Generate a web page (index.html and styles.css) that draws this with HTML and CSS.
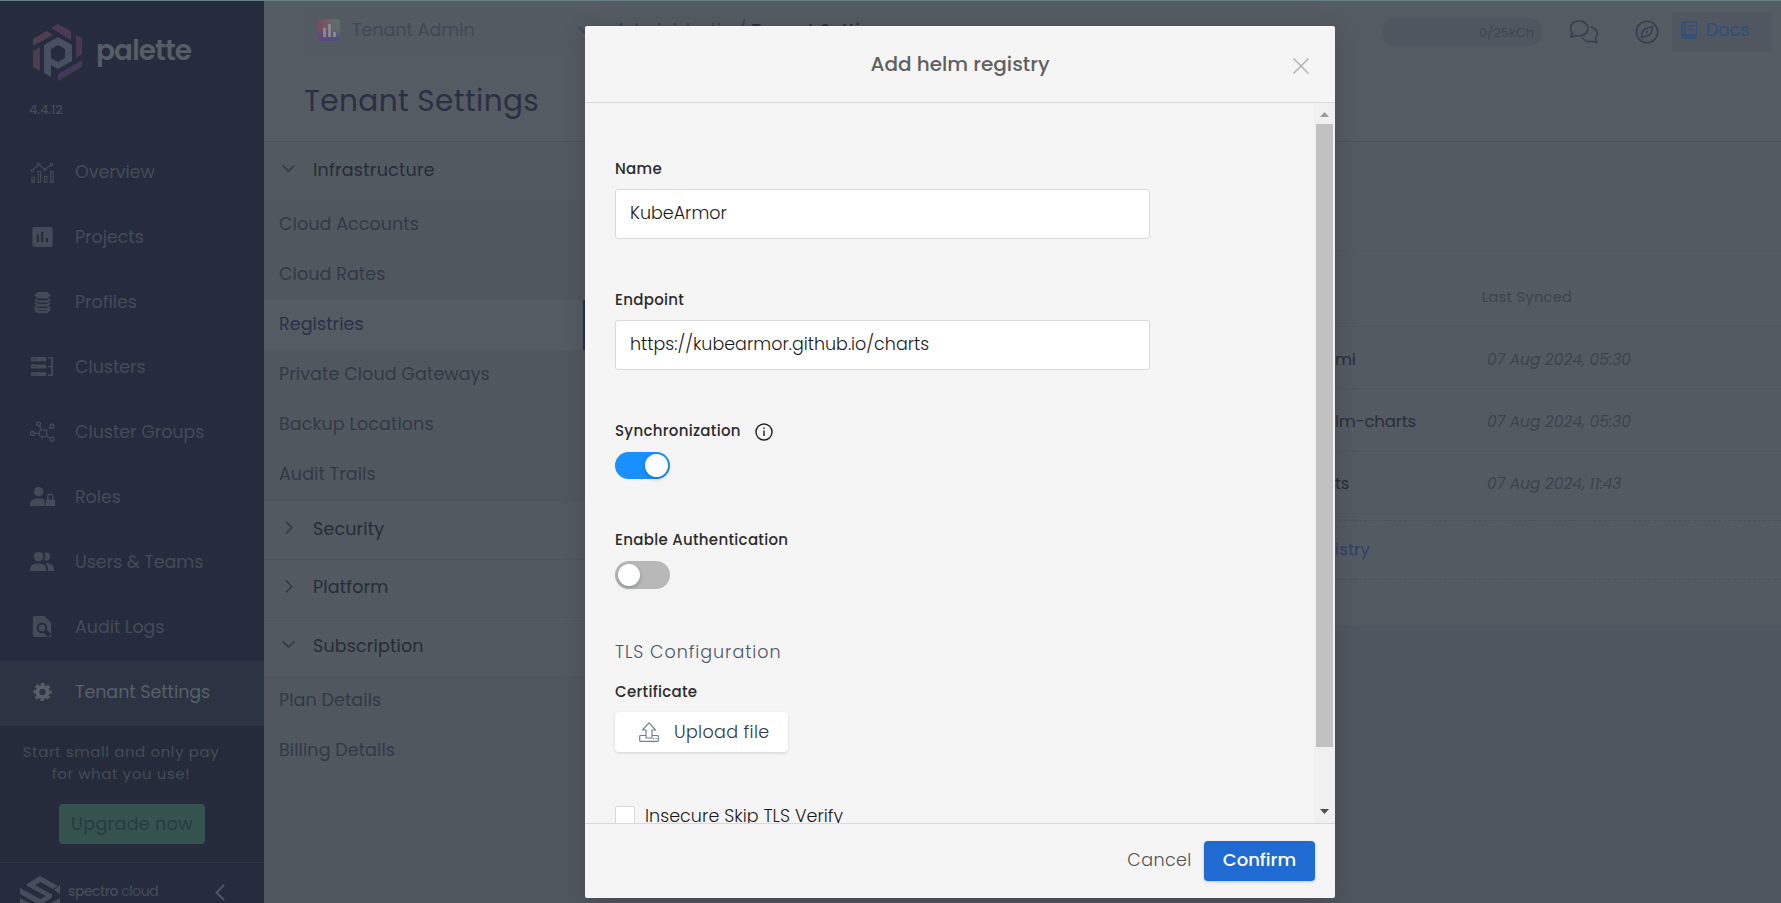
FILE: index.html
```html
<!DOCTYPE html>
<html lang="en">
<head>
<meta charset="utf-8">
<title>Tenant Settings</title>
<link rel="stylesheet" href="styles.css">
</head>
<body>
<div class="app">
  <aside class="sidebar">
    <div class="brand">
      <svg class="brand-mark" width="50" height="57" viewBox="0 0 50 57">
        <path fill="#4d3f50" d="M0 15 14 7l6 4L0 22z"/>
        <path fill="#4b3a53" d="M18 4l7-4 13 7v9z"/>
        <path fill="#463953" d="M43 11l6 3v16l-6 4z"/>
        <path fill="#41385a" d="M25 50 49 36v7L25 57z"/>
        <path fill="#4d3d4c" d="M0 27l7-4v24l-7-4z"/>
        <path fill="#484f63" fill-rule="evenodd" d="M11 21l14-8 14 8v16l-14 8-7-4v12l-7-4zM18 25v9l7 4 7-4v-9l-7-4z"/>
      </svg>
      <span class="brand-name">palette</span>
    </div>
    <div class="version">4.4.12</div>
    <nav class="menu">
      <a class="menu-item"><svg class="mi" viewBox="0 0 26 26"><g fill="none" stroke="currentColor" stroke-width="1.2"><path d="M2 19h2.500v5H2zM8.500 13h2.500v11H8.500zM15 18h2.500v6H15zM21.500 13H24v11h-2.500zM3.500 11 8 6.500M10.500 6.500 14 10M17 10l4.500-4"/><circle cx="2.500" cy="12" r="1.300"/><circle cx="9.200" cy="5.500" r="1.300"/><circle cx="15.500" cy="11" r="1.300"/><circle cx="22.500" cy="5.500" r="1.300"/></g></svg><span>Overview</span></a>
      <a class="menu-item"><svg class="mi" viewBox="0 0 26 26"><path fill="currentColor" fill-rule="evenodd" d="M5 3h16a2.500 2.500 0 0 1 2.500 2.500v16A2.500 2.500 0 0 1 21 24H5a2.500 2.500 0 0 1-2.500-2.500v-16A2.500 2.500 0 0 1 5 3zM7 11v8h2.200v-8zM11.500 8v11h2.300V8zM16.500 14.500V19h2.200v-4.500z"/></svg><span>Projects</span></a>
      <a class="menu-item"><svg class="mi" viewBox="0 0 26 26"><path fill="currentColor" d="M8 3h10l3.500 3.500L18 10H8L4.500 6.500z"/><g fill="none" stroke="currentColor" stroke-width="2.200"><path d="M5 10.500 8.500 13h9l3.500-2.500M5 14.500 8.500 17h9l3.500-2.500M5 18.500 8.500 21h9l3.500-2.500M5 21.500 8.500 24h9l3.500-2.500"/></g></svg><span>Profiles</span></a>
      <a class="menu-item"><svg class="mi" viewBox="0 0 26 26"><path fill="currentColor" d="M2 3h14a1 1 0 0 1 1 1v2.500a1 1 0 0 1-1 1H2a1 1 0 0 1-1-1V4a1 1 0 0 1 1-1zM2 11h14a1 1 0 0 1 1 1v2a1 1 0 0 1-1 1H2a1 1 0 0 1-1-1v-2a1 1 0 0 1 1-1zM2 19h14a1 1 0 0 1 1 1v2a1 1 0 0 1-1 1H2a1 1 0 0 1-1-1v-2a1 1 0 0 1 1-1z"/><path fill="none" stroke="currentColor" stroke-width="1.600" d="M19 4h4v18h-4M19 13h4"/><path stroke="#262c3d" d="M3 5.200h1M5.500 5.200h1M3 13h1M5.500 13h1M3 21h1M5.500 21h1"/></svg><span>Clusters</span></a>
      <a class="menu-item"><svg class="mi" viewBox="0 0 26 26"><g fill="none" stroke="currentColor" stroke-width="1.400"><circle cx="13.500" cy="15" r="4"/><circle cx="9" cy="5" r="2"/><circle cx="23" cy="7.500" r="2"/><circle cx="2.500" cy="15" r="2"/><circle cx="23" cy="21" r="2"/><path d="M10 7l2 4.500M5 15h4M17 12l1-.8M19.500 10l1.500-1M17 17.500l4 2.500"/></g></svg><span>Cluster Groups</span></a>
      <a class="menu-item"><svg class="mi" viewBox="0 0 26 26"><g fill="currentColor"><circle cx="9" cy="8" r="5"/><path d="M0 23c0-5 2-8 7-8h5c2 0 3 1 3 2v6zM16.500 16H25a1 1 0 0 1 1 1v6H16z"/></g><path fill="none" stroke="currentColor" stroke-width="1.500" d="M18.500 16v-3a2.500 2.500 0 0 1 5 0v3"/></svg><span>Roles</span></a>
      <a class="menu-item"><svg class="mi" viewBox="0 0 26 26"><g fill="currentColor"><circle cx="9" cy="8" r="5"/><path d="M0 23c0-5 2-8 7-8h3c5 0 7 3 7 8zM15 4c3.500-1 6 1 6 4s-3 5-6 3.800c1.200-2.200 1.200-5.500 0-7.800zM16 15c5-.5 9 1 9 8h-6c0-4-1-6-3-8z"/></g></svg><span>Users &amp; Teams</span></a>
      <a class="menu-item"><svg class="mi" viewBox="0 0 26 26"><path fill="currentColor" d="M5 2h10l7 7v12l-4.500-4.500A5.500 5.500 0 1 0 14 19.700l4.500 4.300H5a2 2 0 0 1-2-2V4a2 2 0 0 1 2-2z"/><circle cx="12.500" cy="14.500" r="3.400" fill="currentColor"/><path stroke="currentColor" stroke-width="1.500" d="M20 22l2 2"/></svg><span>Audit Logs</span></a>
      <a class="menu-item active"><svg class="mi" viewBox="0 0 26 26"><g fill="none" stroke="currentColor"><circle cx="13" cy="13.500" r="5.300" stroke-width="4"/><circle cx="13" cy="13.500" r="8.300" stroke-width="2.400" stroke-dasharray="3.700 2.819" stroke-dashoffset="1.850"/></g></svg><span>Tenant Settings</span></a>
    </nav>
    <div class="promo">
      <p class="promo-text">Start small and only pay<br>for what you use!</p>
      <button class="upgrade">Upgrade now</button>
    </div>
    <div class="side-foot">
      <svg width="40" height="40" viewBox="0 0 40 40"><path fill="#464d5b" d="M20 0 38 10l-5 3L20 6l-5 3 17 9.500v3L20 29 0 18v-6l20 11 6-3L7 10V8zM0 22l20 11 20-11v6L20 40 0 28zM40 9v9l-6-4z"/></svg>
      <span class="foot-name"><b>spectro</b> cloud</span>
      <svg class="foot-arrow" width="10" height="17" viewBox="0 0 10 17"><path fill="none" stroke="#505866" stroke-width="1.800" d="M9 1 1.500 8.500 9 16"/></svg>
    </div>
  </aside>

  <div class="page">
    <header class="header">
      <div class="topbar">
        <div class="scope">
          <svg width="22" height="22" viewBox="0 0 22 22"><defs><linearGradient id="g1" x1="0" y1="0" x2="1" y2="0"><stop offset="0" stop-color="#764a65"/><stop offset=".5" stop-color="#72605f"/><stop offset="1" stop-color="#56706d"/></linearGradient><linearGradient id="g2" x1="0" y1="0" x2="0" y2="1"><stop offset=".45" stop-color="#554780" stop-opacity="0"/><stop offset="1" stop-color="#554780"/></linearGradient></defs><rect width="22" height="22" rx="4" fill="url(#g1)"/><rect width="22" height="22" rx="4" fill="url(#g2)"/><path stroke="#8b8e9d" stroke-width="2.600" d="M6.500 9v9M11.500 5v13M16.500 13v5"/></svg>
          <span class="scope-name">Tenant Admin</span>
          <svg class="scope-arrow" width="12" height="8" viewBox="0 0 12 8"><path fill="none" stroke="#424957" stroke-width="1.500" d="M1 1l5 5.500L11 1"/></svg>
        </div>
        <div class="crumbs"><span class="crumb-root">Administration</span><span>/</span><span class="crumb">Tenant Settings</span></div>
        <div class="tools">
          <div class="usage">0/25kCh</div>
          <svg class="chat" width="30" height="24" viewBox="0 0 30 24"><g fill="none" stroke="#383f4e" stroke-width="1.700" stroke-linejoin="round"><path d="M2 17c0-1.500 1-3 1-4C-.5 7 3 1 10 1c5.500 0 9 3.500 9 7.500S15.500 16 10 16c-1.500 0-2.500-.2-3.500-.5C5 16.500 3.500 17 2 17z"/><path d="M21.500 7c6 .7 8.500 6.500 5 11 0 1.200.8 3 1.800 4.500-2.300 0-3.500-.4-4.800-1.200-4.500 1.200-8.500-.3-10-3.800"/></g></svg>
          <svg class="compass" width="24" height="24" viewBox="0 0 24 24"><g fill="none" stroke="#383f4e" stroke-width="1.600" stroke-linejoin="round"><circle cx="12" cy="12" r="10.700"/><path d="M17.500 6.500c0 4-1 7.500-3.800 8.800l-7.200 2.200c0-4 1-7.500 3.800-8.800z"/></g><circle cx="12" cy="12" r="1.200" fill="#383f4e"/></svg>
          <div class="docs"><svg width="17" height="18" viewBox="0 0 17 18"><g fill="none" stroke="#2c4f7b" stroke-width="1.300"><path d="M1 15V3a2 2 0 0 1 2-2h12.500v12.500H3A1.800 1.800 0 0 0 3 17h12.500M4 1v12.500M14.500 13.500V17M7 5h6M7 8.500h6M4 15.200h10"/></g></svg><span>Docs</span></div>
        </div>
      </div>
      <h1 class="title">Tenant Settings</h1>
    </header>
    <div class="columns">
      <nav class="subnav">
        <div class="group"><svg class="ch" viewBox="0 0 12 12"><path d="M.5 3 6 8.500 11.500 3"/></svg>Infrastructure</div>
        <a class="sub">Cloud Accounts</a>
        <a class="sub">Cloud Rates</a>
        <a class="sub current">Registries</a>
        <a class="sub">Private Cloud Gateways</a>
        <a class="sub">Backup Locations</a>
        <a class="sub">Audit Trails</a>
        <div class="group line"><svg class="ch" viewBox="0 0 12 12"><path d="M3.500.5 9 6l-5.500 5.500"/></svg>Security</div>
        <div class="group line"><svg class="ch" viewBox="0 0 12 12"><path d="M3.500.5 9 6l-5.500 5.500"/></svg>Platform</div>
        <div class="group line"><svg class="ch" viewBox="0 0 12 12"><path d="M.5 3 6 8.500 11.500 3"/></svg>Subscription</div>
        <a class="sub">Plan Details</a>
        <a class="sub">Billing Details</a>
      </nav>
      <main class="main">
        <div class="panel">
          <div class="row head"><span class="ep"></span><span class="synced">Last Synced</span></div>
          <div class="row"><span class="ep">mi</span><span class="date">07 Aug 2024, 05:30</span></div>
          <div class="row"><span class="ep">lm-charts</span><span class="date">07 Aug 2024, 05:30</span></div>
          <div class="row"><span class="ep">ts</span><span class="date">07 Aug 2024, 11:43</span></div>
          <div class="add">istry</div>
        </div>
      </main>
    </div>
  </div>
</div>

<section class="modal">
  <header class="modal-head">
    <h2 class="modal-title">Add helm registry</h2>
    <svg class="close" width="16" height="16" viewBox="0 0 16 16"><path stroke="#b4b4b4" stroke-width="1.500" d="M.5.5l15 15M15.500.5l-15 15"/></svg>
  </header>
  <div class="modal-body">
    <form class="form">
      <label class="label">Name</label>
      <div class="input">KubeArmor</div>
      <label class="label">Endpoint</label>
      <div class="input">https://kubearmor.github.io/charts</div>
      <label class="label">Synchronization <svg class="info" width="18" height="18" viewBox="0 0 18 18"><circle cx="9" cy="9" r="8" fill="none" stroke="#222" stroke-width="1.400"/><path stroke="#222" stroke-width="1.400" d="M9 7.500V13M9 4.500V6"/></svg></label>
      <div class="switch on"></div>
      <label class="label">Enable Authentication</label>
      <div class="switch"></div>
      <h3 class="section">TLS Configuration</h3>
      <label class="label cert">Certificate</label>
      <div class="upload"><svg width="20" height="20" viewBox="0 0 20 20"><g fill="none" stroke="#718096" stroke-width="1.200" stroke-linejoin="round"><path d="M7 16V8H3.500L10 .8 16.500 8H13v8z"/><path d="M7 13.500H1.500a.8.800 0 0 0-.8.800v4.200c0 .5.300.8.800.8h17c.5 0 .8-.3.800-.8v-4.200a.8.800 0 0 0-.8-.8H13M14 16.700h1.200M16.500 16.700h1.200"/></g></svg><span>Upload file</span></div>
      <div class="check"><span class="box"></span><span>Insecure Skip TLS Verify</span></div>
    </form>
    <div class="scroll">
      <svg width="9" height="5" viewBox="0 0 9 5"><path fill="#9c9c9c" d="M4.500 0 9 5H0z"/></svg>
      <div class="thumb"></div>
      <svg class="down" width="9" height="5" viewBox="0 0 9 5"><path fill="#4f4f4f" d="M4.500 5 0 0h9z"/></svg>
    </div>
  </div>
  <footer class="modal-foot">
    <button class="cancel">Cancel</button>
    <button class="confirm">Confirm</button>
  </footer>
</section>
</body>
</html>
```

FILE: styles.css
```css
* { box-sizing: border-box; }
body {
  margin: 0;
  width: 1781px;
  height: 903px;
  overflow: hidden;
  font-family: Poppins, Inter, "Open Sans", sans-serif;
  font-size: 17.500px;
  background: #50565f;
}
h1, h2, h3, p { margin: 0; font-weight: 400; }
button { border: 0; font: inherit; padding: 0; }
svg { flex: none; display: block; }

.app { display: flex; height: 903px; border-top: 1px solid #6b7f86; }

.sidebar { width: 264px; flex: none; background: #262c3d; color: #444b58; display: flex; flex-direction: column; }
.brand { display: flex; align-items: flex-start; height: 103px; padding: 23px 0 0 33px; gap: 13px; }
.brand-name { font-size: 28px; line-height: 36px; font-weight: 600; color: #555d66; padding-top: 9px; letter-spacing: -1px; }
.version { height: 37px; padding-left: 29px; font-size: 13px; line-height: 12px; font-weight: 500; letter-spacing: -0.3px; }
.menu-item { display: flex; align-items: center; height: 65px; padding: 0 0 4px 30px; gap: 20px; letter-spacing: -0.05px; }
.mi { width: 25px; height: 25px; }
.menu-item.active { background: #2c3342; color: #58606a; }
.promo { background: #252b3a; height: 137px; padding-top: 15px; text-align: center; border-bottom: 1px solid #2d3646; }
.promo-text { font-size: 15px; line-height: 22px; letter-spacing: 0.6px; width: 242px; }
.upgrade { display: block; margin: 19px 0 0 59px; width: 146px; height: 40px; border-radius: 4px; background: #34534f; color: #263b40; letter-spacing: 0.35px; }
.side-foot { flex: 1; display: flex; align-items: flex-start; padding: 13px 0 0 20px; overflow: hidden; }
.foot-name { font-size: 14px; line-height: 18px; margin: 6px 0 0 8px; width: 148px; letter-spacing: -0.5px; }
.foot-name b { font-weight: 500; }
.foot-arrow { margin: 8px 0 0 -1px; }

.page { flex: 1; display: flex; flex-direction: column; }
.header { height: 141px; background: #555b62; border-bottom: 1px solid #4b525c; padding: 11px 9px 0 40px; }
.topbar { display: flex; height: 40px; }
.scope { width: 296px; background: #535a62; border-radius: 4px; display: flex; align-items: center; padding: 0 0 4px 14px; color: #414855; }
.scope-name { margin-left: 12px; width: 226px; }
.crumbs { display: flex; gap: 9px; padding-left: 15px; line-height: 36px; color: #3d4452; flex: 1; min-width: 0; white-space: nowrap; }
.crumb { color: #2d3344; font-weight: 500; margin-left: -4px; letter-spacing: 0.3px; }
.crumb-root { width: 114px; }
.tools { display: flex; flex: none; }
.usage { width: 161px; height: 28px; margin: 6px 26px 0 0; border-radius: 14px; background: #50565f; font-size: 13px; line-height: 29px; text-align: right; padding-right: 9px; color: #3e4551; }
.chat { margin: 8px 36px 0 0; }
.compass { margin: 8px 13px 0 0; }
.docs { width: 100px; border-radius: 4px; background: #515761; display: flex; align-items: center; gap: 8px; padding: 0 0 4px 9px; color: #2c4f7b; }
.title { font-size: 29.500px; line-height: 40px; margin-top: 29px; color: #2a3042; letter-spacing: 0.4px; }

.columns { display: flex; flex: 1; }
.subnav { width: 321px; flex: none; background: #51575f; }
.group { height: 58px; display: flex; align-items: center; gap: 18px; padding: 0 0 3px 18px; background: #525961; color: #262c36; letter-spacing: 0.25px; }
.group.line { height: 58.500px; border-top: 1px solid #4d545d; padding-bottom: 2px; letter-spacing: 0.15px; }
.ch { width: 13px; height: 13px; margin-bottom: 2px; fill: none; stroke: #363c49; stroke-width: 1.600; }
.sub { display: block; height: 50px; line-height: 48px; padding-left: 15px; color: #323946; letter-spacing: 0.08px; }
.sub.current { background: #545b63; color: #2a3046; border-right: 2px solid #2a3046; }
.main { flex: 1; background: #50565f; }
.panel { height: 483px; background: #545a62; padding-top: 108px; }
.row { display: flex; align-items: center; height: 62.300px; padding: 3px 0 0 750px; border-bottom: 1px solid #50565f; color: #282e37; }
.row.head { height: 77px; border-top: 1px solid #50565f; padding-top: 18px; font-size: 14.500px; color: #3c434d; }
.ep { width: 152px; font-size: 16.500px; letter-spacing: -0.2px; }
.synced { margin-left: -5px; letter-spacing: 0.35px; }
.date { font-style: italic; font-size: 15.400px; color: #3c434d; }
.add { height: 60px; margin-top: 6px; padding-left: 750px; line-height: 57px; font-size: 16.800px; color: #2d4066; border: 1px dashed #4b525c; border-width: 1px 0; }

.modal { position: absolute; left: 585px; top: 26px; width: 750px; height: 872px; background: #f5f5f5; border-radius: 2px; box-shadow: 0 4px 24px rgba(0, 0, 0, .16); display: flex; flex-direction: column; }
.modal-head { height: 77px; flex: none; border-bottom: 1px solid #d9d9d9; display: flex; align-items: center; padding: 0 26px 0 286px; }
.modal-title { font-size: 20px; line-height: 26px; font-weight: 500; color: #606060; width: 178px; white-space: nowrap; display: flex; justify-content: center; }
.close { margin: 4px 0 0 auto; }
.modal-body { flex: 1; min-height: 0; display: flex; overflow: hidden; }
.form { flex: 1; padding: 53px 0 0 30px; height: 720px; overflow: hidden; }
.label { display: flex; align-items: center; height: 26px; margin-bottom: 7px; padding-bottom: 2px; font-size: 15px; font-weight: 500; color: #2c2c2c; letter-spacing: 0.3px; }
.input { width: 535px; height: 50px; margin-bottom: 48px; border: 1px solid #d9d9d9; border-radius: 3px; background: #fff; padding-left: 14px; font-weight: 300; line-height: 46px; color: #1a1a1a; }
.info { margin: 4px 0 0 14px; }
.switch { width: 55px; height: 28px; border-radius: 14px; margin: 8px 0 47px; background: #b8b8b8; padding: 3px; }
.switch::before { content: ""; display: block; width: 22px; height: 22px; border-radius: 50%; background: #fff; box-shadow: 0 2px 4px rgba(0, 35, 11, .25); }
.switch.on { background: #1890ff; height: 27px; padding: 2px 2px 2px 30px; margin-bottom: 48px; }
.switch.on::before { width: 23px; height: 23px; }
.section { font-size: 17.500px; line-height: 26px; font-weight: 300; color: #4a5568; letter-spacing: 0.95px; padding-top: 3px; margin-bottom: 14px; }
.label.cert { margin-bottom: 7px; }
.upload { width: 173px; height: 40px; border-radius: 4px; background: #fff; box-shadow: 0 1px 3px rgba(0, 0, 0, .14); display: flex; align-items: center; gap: 15px; padding-left: 24px; font-weight: 300; color: #2d3648; letter-spacing: 0.35px; }
.check { display: flex; align-items: flex-start; gap: 10px; margin-top: 54px; font-weight: 300; line-height: 20px; color: #1a1a1a; white-space: nowrap; letter-spacing: 0.05px; }
.box { width: 20px; height: 20px; border: 1px solid #d9d9d9; border-radius: 2px; background: #fff; }
.scroll { width: 21px; background: #f0f0f0; display: flex; flex-direction: column; align-items: center; padding: 9px 0 9px; }
.thumb { width: 17px; height: 623px; margin-top: 7px; background: #c1c1c1; }
.down { margin-top: auto; }
.modal-foot { height: 75px; flex: none; border-top: 1px solid #d9d9d9; display: flex; justify-content: flex-end; align-items: flex-start; padding: 17px 20px 0 0; gap: 12px; }
.cancel { height: 40px; width: 65px; padding-bottom: 2px; background: none; color: #505050; font-weight: 300; letter-spacing: 0.4px; }
.confirm { width: 111px; height: 40px; padding-bottom: 3px; border-radius: 4px; background: #206bd2; color: #fff; font-size: 18px; font-weight: 500; box-shadow: 0 1px 3px rgba(0, 0, 0, .2); }
```
